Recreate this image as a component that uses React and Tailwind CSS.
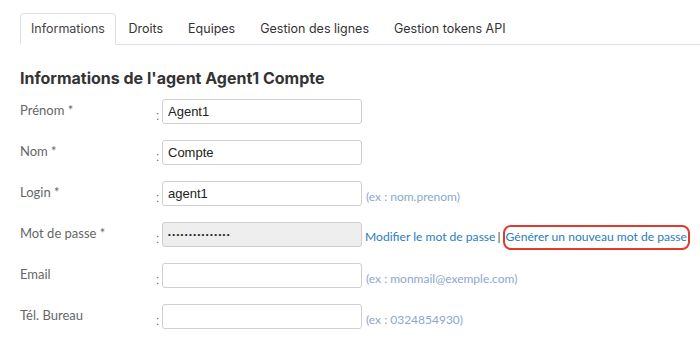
// App.jsx
const champs = [
  { label: "Prénom *", value: "Agent1" },
  { label: "Nom *", value: "Compte" },
  { label: "Login *", value: "agent1", hint: "(ex : nom.prenom)" },
  { label: "Mot de passe *", value: "•••••••••••••••", password: true },
  { label: "Email", value: "", hint: "(ex : monmail@exemple.com)" },
  { label: "Tél. Bureau", value: "", hint: "(ex : 0324854930)" },
];

const onglets = ["Informations", "Droits", "Equipes", "Gestion des lignes", "Gestion tokens API"];

export default function App() {
  return (
    <div className="bg-white w-[700px] h-[344px] overflow-hidden pl-5 pt-[13px]">
      {/* Onglets */}
      <ul className="flex border-b border-[#dee2e6] font-['Inter',sans-serif] text-[12.5px] text-[#333] whitespace-nowrap">
        {onglets.map((o, i) => (
          <li
            key={o}
            className={
              i === 0
                ? "h-[32px] -mb-px px-[10px] flex items-center border border-[#dee2e6] border-b-white rounded-t-[4px] bg-white text-[#444]"
                : "h-[32px] -mb-px px-[11.5px] flex items-center border border-transparent"
            }
          >
            {o}
          </li>
        ))}
      </ul>

      <h1 className="mt-[21px] text-[16px] leading-6 font-bold text-[#333] font-['Inter',sans-serif] whitespace-nowrap">
        Informations de l'agent Agent1 Compte
      </h1>

      {/* Formulaire */}
      <div className="mt-[9px]">
        {champs.map(c => (
          <div key={c.label} className="flex items-start h-[41px] whitespace-nowrap">
            <div className="w-[136px] shrink-0 pt-[1px] text-[13px] leading-5 text-[#666] font-['Lato',sans-serif]">
              {c.label}
            </div>
            <div className="w-[6px] shrink-0 pt-[9px] text-[12px] leading-4 text-[#666] font-['Liberation_Sans',sans-serif]">:</div>
            <div
              className={
                "w-[200px] shrink-0 h-[25px] rounded-[3px] border border-[#cfcfcf] px-[5px] flex items-center text-[13px] text-[#222] font-['Liberation_Sans',sans-serif] " +
                (c.password ? "bg-[#eeeeee] !text-[8px] tracking-[1.4px] !text-[#222]" : "bg-white")
              }
            >
              {c.value}
            </div>
            {c.hint && (
              <div className="ml-[4px] pt-[8px] text-[12px] leading-4 text-[#8aa8d0] font-['Lato',sans-serif]">
                {c.hint}
              </div>
            )}
            {c.password && (
              <div className="ml-[3px] mt-[3px] flex items-center text-[12.1px] text-[#2a7cc0] font-['Lato',sans-serif]">
                <span>Modifier le mot de passe</span>
                <span className="mx-[2px] text-[#333]">|</span>
                <span className="h-[25px] px-[1px] flex items-center border-2 border-[#e03a2c] rounded-[8px]">
                  Générer un nouveau mot de passe
                </span>
              </div>
            )}
          </div>
        ))}
      </div>
    </div>
  );
}
